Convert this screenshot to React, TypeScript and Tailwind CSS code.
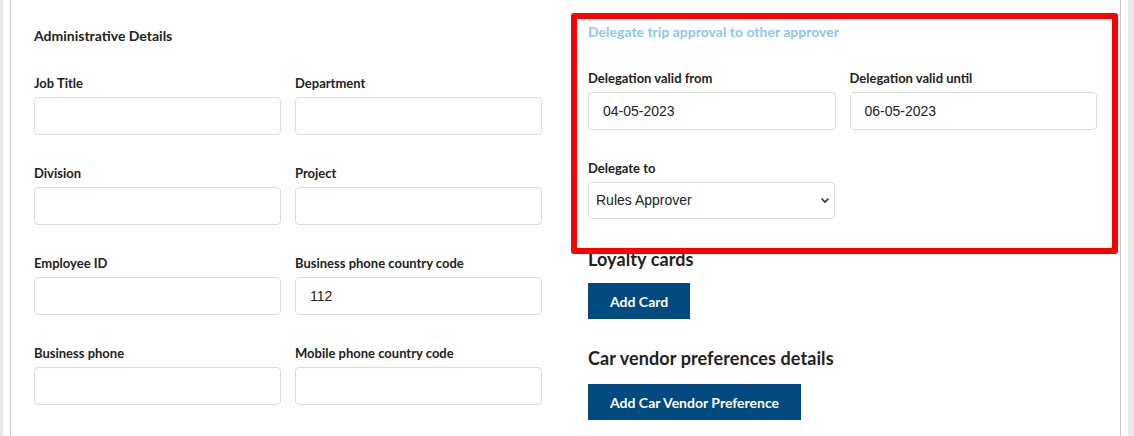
import React from "react";

const label = "block text-[13px] font-bold leading-4 text-[#222] mb-[6px]";
const input =
  "block w-full h-[38px] rounded-[4px] border border-[#dcdcdc] bg-white px-[14px] text-[14px] text-[#222] outline-none";

function Field({ name, value }: { name: string; value?: string }) {
  return (
    <div>
      <label className={label}>{name}</label>
      <input className={input} style={{ fontFamily: "'Liberation Sans', Arial, sans-serif" }} defaultValue={value} />
    </div>
  );
}

export default function App() {
  return (
    <div
      className="relative flex h-[436px] w-[1134px] overflow-hidden bg-white"
      style={{ fontFamily: "Lato, 'Noto Sans', sans-serif" }}
    >
      <div className="w-[3px] bg-[#e9e9e9]" />
      <div className="w-[7px]" />
      <main className="flex flex-1 gap-[46px] border-x border-[#c8c8c8] pl-[23px] pr-[22px]">
        <section className="w-[508px] pt-[28px]">
          <h2 className="text-[14px] font-bold leading-4 text-[#222]">Administrative Details</h2>
          <div className="mt-[31px] grid grid-cols-2 gap-x-[14px] gap-y-[30px]">
            <Field name="Job Title" />
            <Field name="Department" />
            <Field name="Division" />
            <Field name="Project" />
            <Field name="Employee ID" />
            <Field name="Business phone country code" value="112" />
            <Field name="Business phone" />
            <Field name="Mobile phone country code" />
          </div>
        </section>
        <section className="w-[509px] pt-[24px]">
          <p className="text-[14px] font-bold leading-4 text-[#8ec6e8]">
            Delegate trip approval to other approver
          </p>
          <div className="mt-[30px] grid grid-cols-2 gap-x-[14px]">
            <Field name="Delegation valid from" value="04-05-2023" />
            <Field name="Delegation valid until" value="06-05-2023" />
          </div>
          <div className="mt-[30px] w-[247px]">
            <label className={label}>Delegate to</label>
            <div className="relative">
              <select
                className="block h-[37px] w-full appearance-none rounded-[4px] border border-[#dcdcdc] bg-white px-[7px] text-[14px] text-[#222] outline-none"
                style={{ fontFamily: "'Liberation Sans', Arial, sans-serif" }}
                defaultValue="Rules Approver"
              >
                <option>Rules Approver</option>
              </select>
              <svg
                className="pointer-events-none absolute right-[5px] top-[14px]"
                width="10"
                height="8"
                viewBox="0 0 10 8"
                fill="none"
                stroke="#333"
                strokeWidth="1.6"
              >
                <path d="M1.5 2.5 L5 6 L8.5 2.5" />
              </svg>
            </div>
          </div>
          <h3 className="mt-[29px] text-[18px] font-bold leading-[22px] tracking-[0.1px] text-[#222]">Loyalty cards</h3>
          <button className="mt-[13px] h-[36px] bg-[#004a80] px-[22px] text-[14px] font-bold text-white">
            Add Card
          </button>
          <h3 className="mt-[28px] text-[18px] font-bold leading-[22px] tracking-[0.1px] text-[#222]">
            Car vendor preferences details
          </h3>
          <button className="mt-[15px] h-[36px] bg-[#004a80] px-[22px] text-[14px] font-bold text-white">
            Add Car Vendor Preference
          </button>
        </section>
      </main>
      <div className="w-[7px]" />
      <div className="w-[6px] bg-[#e9e9e9]" />
      <div className="pointer-events-none absolute left-[571px] top-[13px] h-[241px] w-[547px] rounded-[3px] border-[6px] border-[#ff0000]" />
    </div>
  );
}
